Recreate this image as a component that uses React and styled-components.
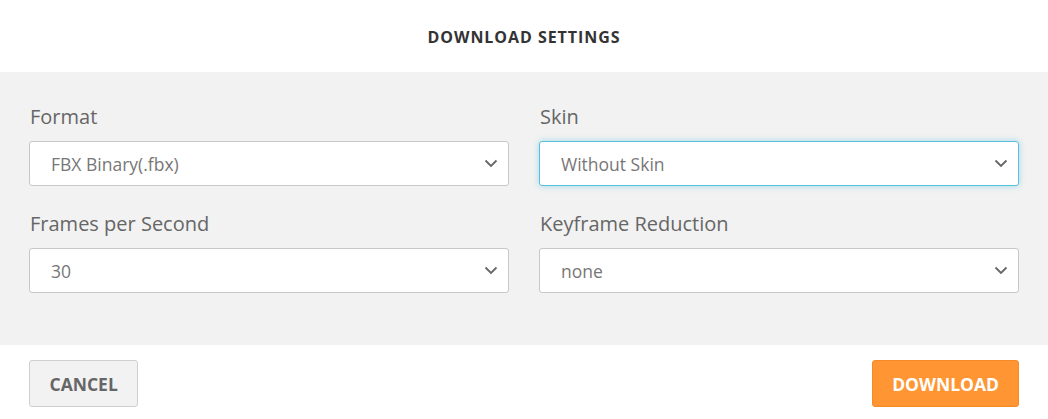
import React from 'react'
import styled, { createGlobalStyle } from 'styled-components'

const Global = createGlobalStyle`
  html, body { margin: 0; padding: 0; background: #fff; }
  body { font-family: "Open Sans", "Noto Sans", sans-serif; }
`

const Dialog = styled.div`
  width: 1048px;
  height: 419px;
  display: flex;
  flex-direction: column;
  background: #fff;
`

const Header = styled.div`
  height: 72px;
  display: flex;
  align-items: center;
  justify-content: center;
  font-size: 16px;
  font-weight: 700;
  color: #333;
  letter-spacing: 0.95px;
  padding-top: 2px;
  box-sizing: border-box;
`

const Body = styled.div`
  background: #f2f2f2;
  padding: 32px 29px 52px;
  display: grid;
  grid-template-columns: 480px 480px;
  column-gap: 30px;
  row-gap: 25px;
`

const Field = styled.div`
  display: flex;
  flex-direction: column;
`

const Label = styled.label`
  font-size: 20px;
  line-height: 26px;
  color: #666;
  margin-bottom: 11px;
  padding-left: 1px;
`

const Select = styled.div`
  height: 45px;
  box-sizing: border-box;
  background: #fff;
  border: 1px solid ${p => (p.focused ? '#5bc0de' : '#c8c8c8')};
  box-shadow: ${p => (p.focused ? '0 0 6px rgba(91, 192, 222, 0.55)' : 'none')};
  border-radius: 3px;
  display: flex;
  align-items: center;
  justify-content: space-between;
  padding: 0 10px 0 21px;
  font-size: 17.5px;
  color: #777;
`

const Chevron = () => (
  <svg width="14" height="9" viewBox="0 0 14 9">
    <path d="M1.5 1.5 L7 7 L12.5 1.5" fill="none" stroke="#666" strokeWidth="1.8" />
  </svg>
)

const Footer = styled.div`
  flex: 1;
  display: flex;
  justify-content: space-between;
  align-items: flex-start;
  padding: 15px 29px 0;
`

const Button = styled.button`
  height: 47px;
  box-sizing: border-box;
  padding: 0 ${p => (p.primary ? '19px' : '19.5px')};
  border-radius: 3px;
  font-family: "Open Sans", "Noto Sans", sans-serif;
  font-size: 17.5px;
  font-weight: 700;
  cursor: pointer;
  background: ${p => (p.primary ? '#ff9633' : '#f2f2f2')};
  border: 1px solid ${p => (p.primary ? '#f58a26' : '#cfcfcf')};
  color: ${p => (p.primary ? '#fff' : '#666')};
`

const fields = [
  { label: 'Format', value: 'FBX Binary(.fbx)' },
  { label: 'Skin', value: 'Without Skin', focused: true },
  { label: 'Frames per Second', value: '30' },
  { label: 'Keyframe Reduction', value: 'none' },
]

export default function App() {
  return (
    <>
      <Global />
      <Dialog>
        <Header>DOWNLOAD SETTINGS</Header>
        <Body>
          {fields.map(f => (
            <Field key={f.label}>
              <Label>{f.label}</Label>
              <Select focused={f.focused}>
                <span>{f.value}</span>
                <Chevron />
              </Select>
            </Field>
          ))}
        </Body>
        <Footer>
          <Button>CANCEL</Button>
          <Button primary>DOWNLOAD</Button>
        </Footer>
      </Dialog>
    </>
  )
}
